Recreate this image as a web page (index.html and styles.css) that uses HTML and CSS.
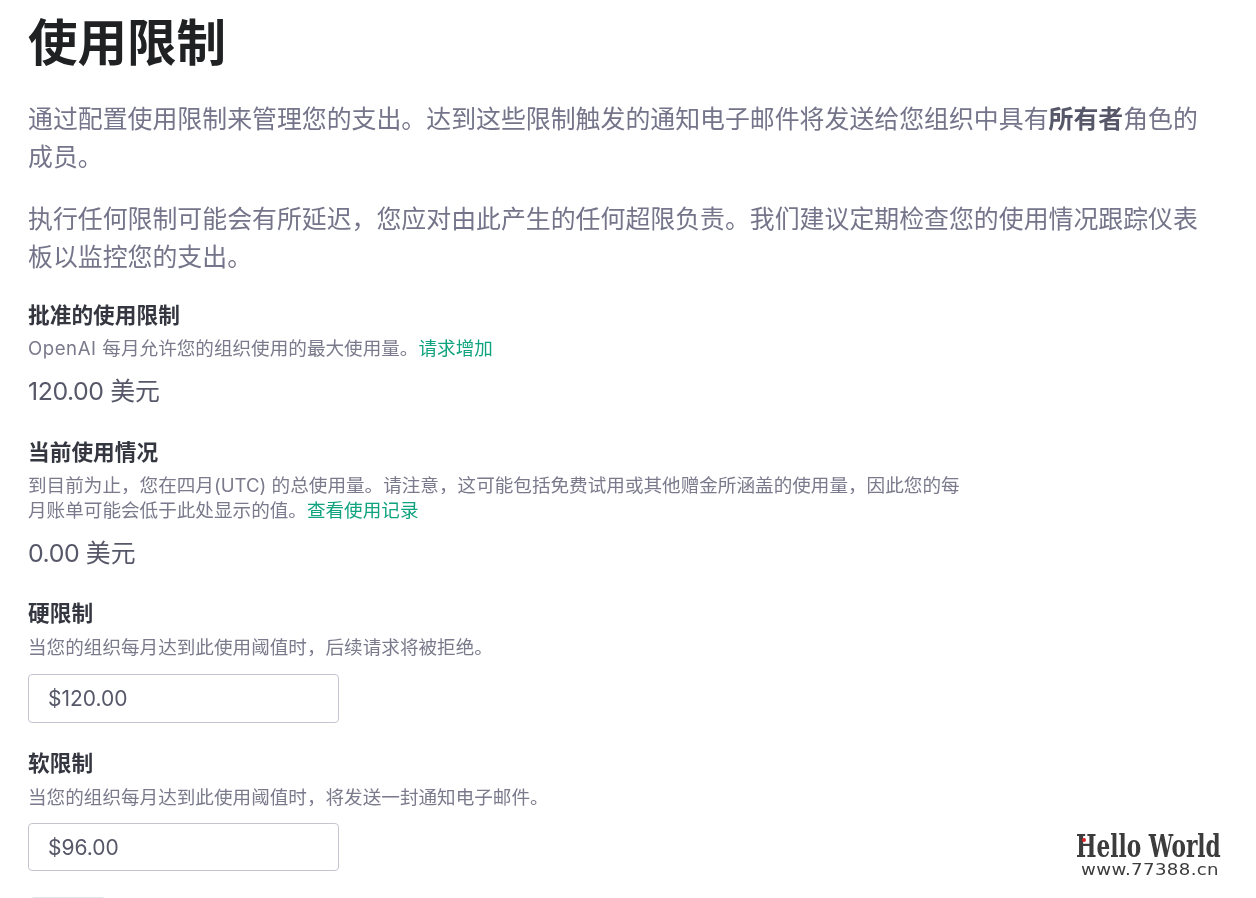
FILE: index.html
```html
<!DOCTYPE html>
<html lang="zh-CN">
<head>
<meta charset="utf-8">
<title>使用限制</title>
<link rel="stylesheet" href="styles.css">
</head>
<body>
<main class="page">
  <h1 class="title">使用限制</h1>
  <p class="lead">通过配置使用限制来管理您的支出。达到这些限制触发的通知电子邮件将发送给您组织中具有<strong>所有者</strong>角色的成员。</p>
  <p class="lead">执行任何限制可能会有所延迟，您应对由此产生的任何超限负责。我们建议定期检查您的使用情况跟踪仪表板以监控您的支出。</p>

  <section class="block block-first">
    <h2 class="label">批准的使用限制</h2>
    <p class="hint"><span class="wide">OpenAI </span>每月允许您的组织使用的最大使用量。<a class="link" href="#">请求增加</a></p>
    <p class="amount"><span class="num">120.00 </span>美元</p>
  </section>

  <section class="block block-usage">
    <h2 class="label">当前使用情况</h2>
    <p class="hint">到目前为止，您在四月(UTC) 的总使用量。请注意，这可能包括免费试用或其他赠金所涵盖的使用量，因此您的每月账单可能会低于此处显示的值。<a class="link" href="#">查看使用记录</a></p>
    <p class="amount"><span class="num">0.00 </span>美元</p>
  </section>

  <section class="block block-hard">
    <h2 class="label">硬限制</h2>
    <p class="hint hint-field">当您的组织每月达到此使用阈值时，后续请求将被拒绝。</p>
    <input class="field" type="text" value="$120.00">
  </section>

  <section class="block block-soft">
    <h2 class="label">软限制</h2>
    <p class="hint hint-field">当您的组织每月达到此使用阈值时，将发送一封通知电子邮件。</p>
    <input class="field field-short" type="text" value="$96.00">
  </section>

  <button class="save" type="button"></button>
</main>
<div class="mark">
  <div class="mark-name">Hello World</div>
  <div class="mark-url">www.77388.cn</div>
  <span class="mark-dot"></span>
</div>
</body>
</html>
```
FILE: styles.css
```css
html, body {
  margin: 0;
  padding: 0;
  height: 898px;
  overflow: hidden;
  background: #fff;
}
body {
  position: relative;
  font-family: Inter, "Noto Sans CJK SC", sans-serif;
  color: #353740;
}
.page {
  padding: 8px 0 0 28px;
  width: 1175px;
  filter: blur(0.5px);
}
.title {
  margin: 0;
  font-size: 49.5px;
  line-height: 70px;
  font-weight: 700;
  color: #202123;
}
.lead {
  margin: 0 0 24px;
  font-size: 24.9px;
  line-height: 38px;
  color: #74748a;
}
.title + .lead { margin-top: 22px; }
.lead strong { font-weight: 700; color: #565869; }
.block { width: 940px; }
.block-first { margin-top: -1px; }
.block-usage { margin-top: 26px; }
.block-hard { margin-top: 25px; }
.block-soft { margin-top: 24px; }
.label {
  margin: 0;
  font-size: 21.7px;
  line-height: 32px;
  font-weight: 700;
  color: #353740;
}
.hint {
  margin: 5px 0 0;
  font-size: 18.6px;
  line-height: 25px;
  color: #7a7a8c;
  width: 932px;
}
.hint-field { margin-top: 6px; }
.wide { letter-spacing: 0.55px; }
.link { color: #10a37f; text-decoration: none; }
.amount {
  margin: 11px 0 0;
  font-size: 24.9px;
  line-height: 38px;
  color: #565869;
}
.num { letter-spacing: -0.45px; }
.field {
  display: block;
  box-sizing: border-box;
  margin-top: 14px;
  width: 311px;
  height: 49px;
  padding: 0 19px;
  border: 1px solid #c5c5d2;
  border-radius: 4px;
  background: #fff;
  font: 400 21px Inter, sans-serif;
  color: #565869;
}
.field-short { height: 48px; margin-top: 13px; }
.save {
  display: block;
  margin: 26px 0 0 2px;
  width: 76px;
  height: 40px;
  border: 1px solid #e5e5ec;
  border-radius: 4px;
  background: #fff;
}
.mark {
  position: absolute;
  left: 1076px;
  top: 829px;
  width: 150px;
  height: 48px;
  color: #3c3c3c;
}
.mark-name {
  font: 700 31px/34px "DejaVu Serif", serif;
  white-space: nowrap;
  width: 198px;
  transform: scaleX(0.7);
  transform-origin: left center;
  filter: blur(0.4px);
}
.mark-url {
  margin-left: 5px;
  font: 400 15px/15px "DejaVu Sans", sans-serif;
  letter-spacing: 0.3px;
  white-space: nowrap;
  width: 116px;
  transform: scaleX(1.21);
  transform-origin: left center;
  filter: blur(0.3px);
}
.mark-dot {
  position: absolute;
  left: 6px;
  top: 9px;
  width: 4px;
  height: 4px;
  border-radius: 50%;
  background: #e02020;
}
```
